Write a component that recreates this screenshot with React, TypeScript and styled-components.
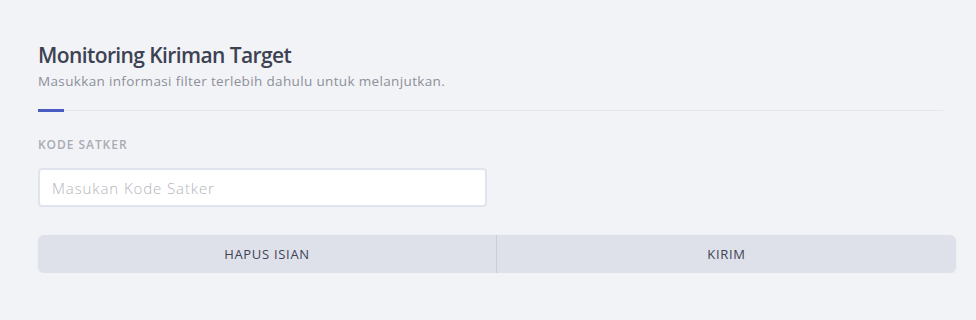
import React from 'react'
import styled, { createGlobalStyle } from 'styled-components'

const GlobalStyle = createGlobalStyle`
  html, body {
    margin: 0;
    padding: 0;
    background: #f2f3f7;
    font-family: 'Open Sans', 'Noto Sans', sans-serif;
  }
`

const App = () => {
  return (
    <>
      <GlobalStyle />
      <Page>
        <Header>
          <Title>Monitoring Kiriman Target</Title>
          <Subtitle>Masukkan informasi filter terlebih dahulu untuk melanjutkan.</Subtitle>
        </Header>
        <Divider>
          <Accent />
        </Divider>
        <Field>
          <Label>Kode Satker</Label>
          <Input placeholder='Masukan Kode Satker' />
        </Field>
        <ButtonGroup>
          <ActionButton>Hapus Isian</ActionButton>
          <ActionButton>Kirim</ActionButton>
        </ButtonGroup>
      </Page>
    </>
  )
}

const Page = styled.div`
  padding: 41px 20px 0 38px;
  width: 918px;
  display: flex;
  flex-direction: column;
`

const Header = styled.div`
  display: flex;
  flex-direction: column;
  padding-right: 13px;
`

const Title = styled.h1`
  margin: 0;
  font-size: 21px;
  font-weight: 600;
  color: #3d4252;
  line-height: 28px;
  letter-spacing: -0.6px;
`

const Subtitle = styled.p`
  margin: 3px 0 0;
  font-size: 13.5px;
  color: #8d9099;
  line-height: 18px;
  letter-spacing: 0.35px;
`

const Divider = styled.div`
  margin: 20px 13px 0 0;
  border-bottom: 1px solid #e4e6ec;
  position: relative;
  height: 0;
`

const Accent = styled.div`
  position: absolute;
  left: 0;
  top: -1px;
  width: 26px;
  height: 3px;
  background: #4a5bc4;
`

const Field = styled.div`
  display: flex;
  flex-direction: column;
  margin-top: 26px;
`

const Label = styled.label`
  font-size: 12px;
  font-weight: 600;
  text-transform: uppercase;
  letter-spacing: 0.95px;
  color: #a9abb2;
  line-height: 16px;
`

const Input = styled.input`
  margin-top: 15px;
  width: 449px;
  height: 39px;
  box-sizing: border-box;
  border: 2px solid #e1e4ec;
  border-radius: 4px;
  background: #fff;
  padding: 0 12px;
  font-family: 'Open Sans', 'Noto Sans', sans-serif;
  font-size: 15px;
  font-weight: 300;
  letter-spacing: 0.9px;
  color: #3f4454;
  outline: none;

  &::placeholder {
    color: #b3b5bc;
  }
`

const ButtonGroup = styled.div`
  margin-top: 28px;
  display: grid;
  grid-template-columns: 1fr 1fr;
  background: #dee1ea;
  border-radius: 6px;
  height: 38px;
  overflow: hidden;
  box-shadow: 0 1px 3px rgba(0, 0, 0, 0.04);
`

const ActionButton = styled.button`
  border: none;
  background: transparent;
  font-family: 'Open Sans', 'Noto Sans', sans-serif;
  font-size: 13px;
  font-weight: 500;
  letter-spacing: 0.7px;
  text-transform: uppercase;
  color: #3f4454;
  cursor: pointer;

  &:not(:last-child) {
    border-right: 1px solid #c9cdd8;
  }
`

export default App
